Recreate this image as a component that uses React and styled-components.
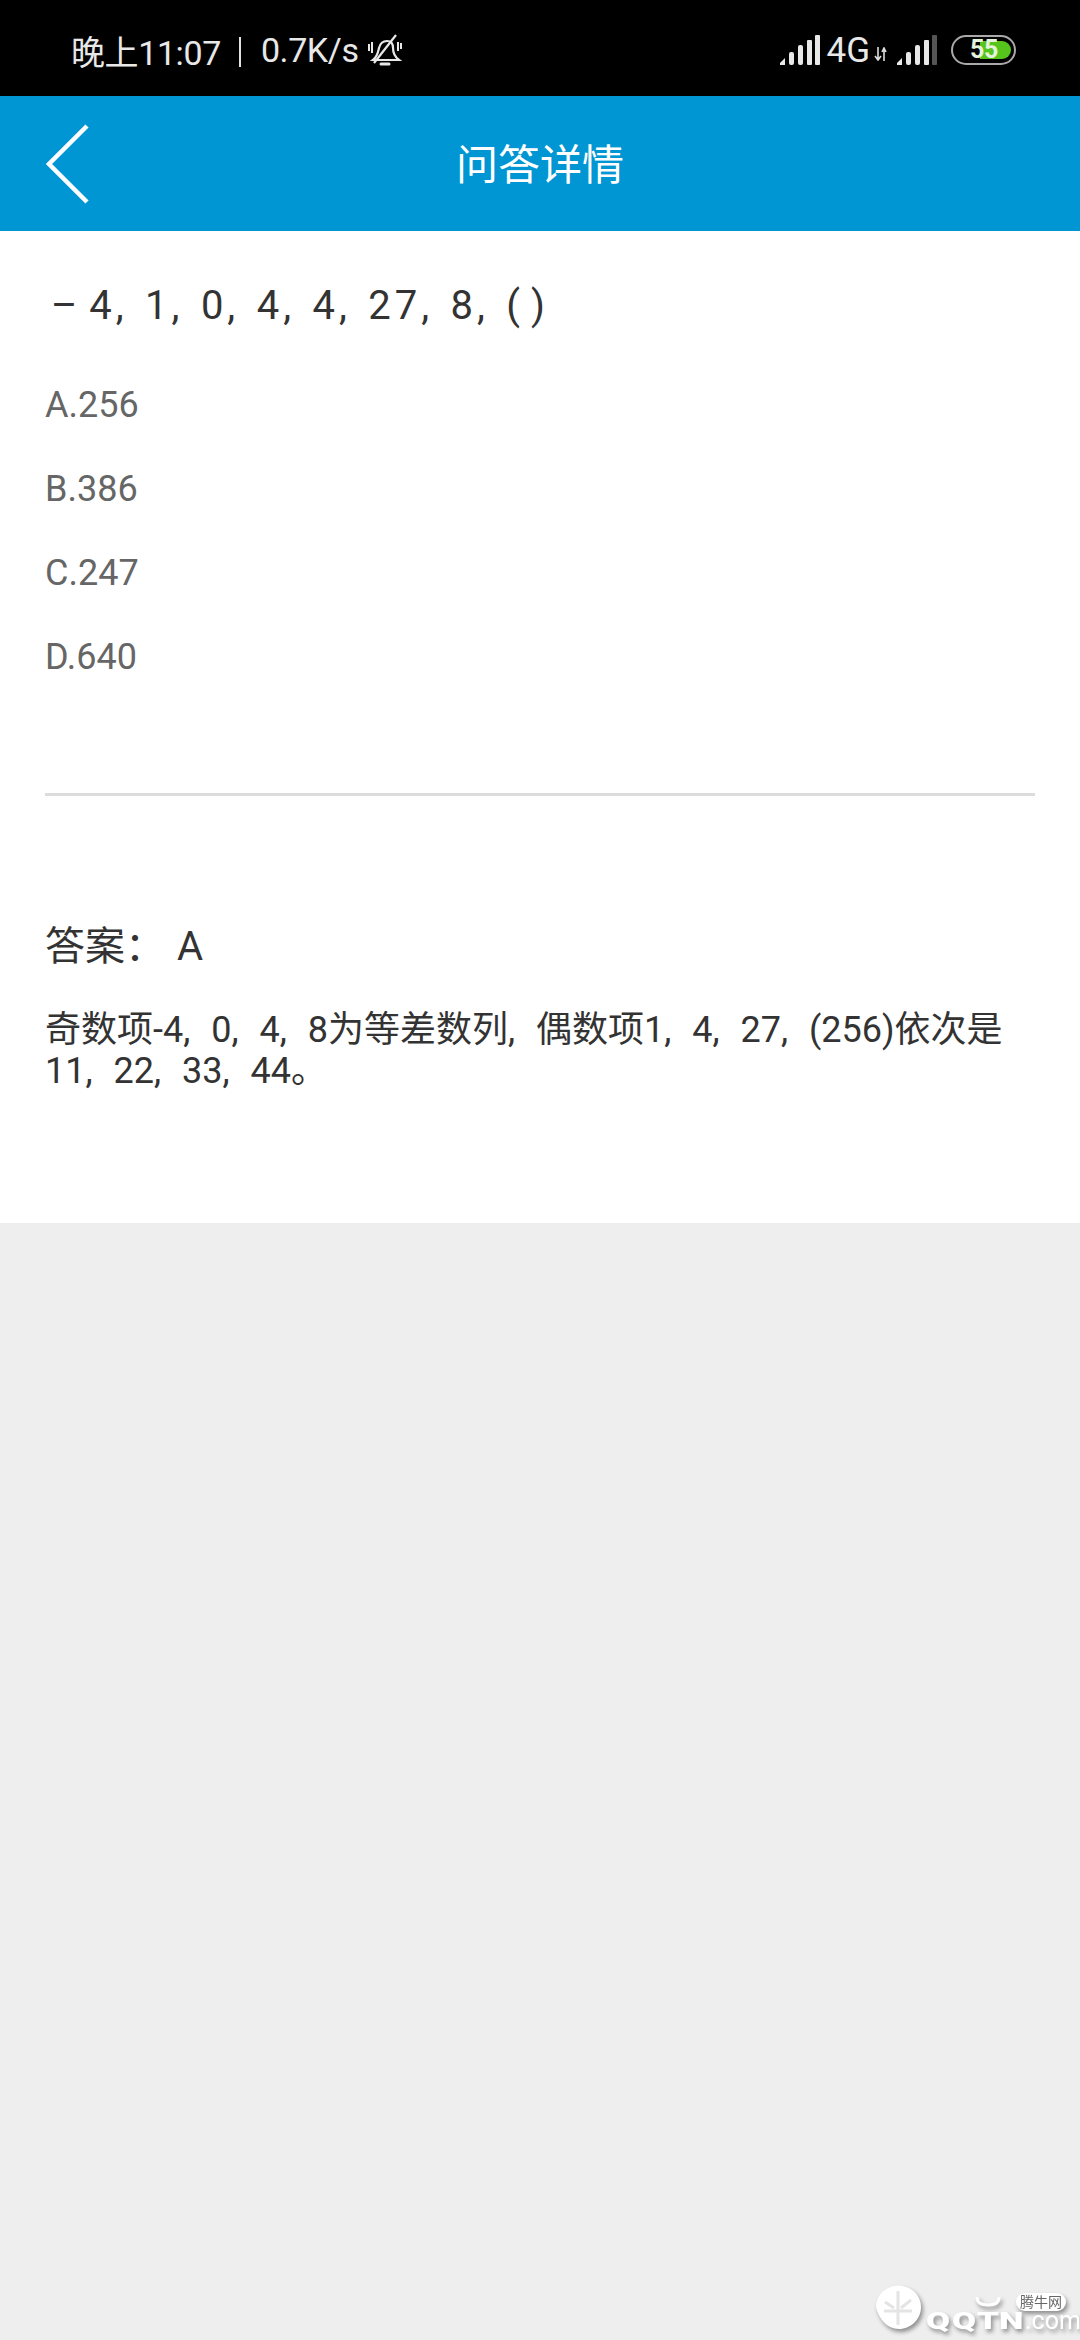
import React from "react";
import styled, { createGlobalStyle } from "styled-components";

const Global = createGlobalStyle`
  html, body { margin: 0; padding: 0; background: #eeeeee; }
  * { box-sizing: border-box; }
  body { font-family: Roboto, "Noto Sans CJK SC", sans-serif; }
`;
const Page = styled.div`
  position: relative; width: 1080px; height: 2340px; background: #eeeeee; overflow: hidden;
  display: flex; flex-direction: column;
`;
const StatusBar = styled.div`
  height: 96px; background: #000; color: #e8e8e8; display: flex; align-items: center;
  justify-content: space-between; padding: 4px 64px 0 71px; font-size: 34px;
`;
const StatusGroup = styled.div`display: flex; align-items: center; letter-spacing: -0.4px;`;
const Sep = styled.span`width: 2px; height: 30px; background: #e0e0e0; margin: 4px 20px 0 18px;`;
const Net = styled.span`font-size: 35px; margin: 0 4px 0 6px; letter-spacing: 0;`;
const Header = styled.header`
  height: 135px; background: #0095d3; display: grid; grid-template-columns: 1fr auto 1fr; align-items: center;
  padding-left: 45px;
`;
const Title = styled.h1`
  margin: 0 0 0 -45px; font-size: 42px; font-weight: 400; color: #fff; line-height: 1; padding-top: 4px;
`;
const Card = styled.main`
  background: #fff; height: 992px; padding: 0 45px; display: flex; flex-direction: column;
`;
const Question = styled.div`
  margin-top: 45px; height: 60px; line-height: 60px; font-size: 40px; color: #333;
  letter-spacing: 4px; word-spacing: 3.5px; padding-left: 6px; white-space: pre;
`;
const Blank = styled.span`word-spacing: 0; letter-spacing: 1.5px;`;
const Options = styled.ul`list-style: none; margin: 27px 0 0; padding: 0;`;
const Option = styled.li`height: 84px; line-height: 84px; font-size: 36px; color: #666;`;
const Divider = styled.hr`border: 0; height: 3px; background: #dcdcdc; margin: 94px 0 0;`;
const Answer = styled.div`margin-top: 121px; font-size: 40px; line-height: 60px; color: #333; word-spacing: 2px;`;
const Explain = styled.p`margin: 33px 0 0; font-size: 36px; line-height: 41px; color: #333; word-spacing: 12px;`;
const Watermark = styled.div`
  position: absolute; left: 875px; top: 2285px; width: 200px; height: 50px; color: #fff;
  filter: drop-shadow(2px 3px 2px rgba(0,0,0,.4));
`;
const Brand = styled.div`position: absolute; left: 51px; bottom: 4px; display: flex; align-items: baseline;`;
const BrandLetter = styled.span`
  display: inline-block; width: ${(p) => p.$w}px; font-size: 24px; font-weight: 900; line-height: 20px;
  transform: scaleX(1.45); transform-origin: left;
`;
const BrandSmall = styled.span`font-size: 25px; font-weight: 400; line-height: 20px; margin-left: -1px;`;
const Bubble = styled.span`
  position: absolute; left: 141px; top: 8px; background: #fff; color: #666; border-radius: 9px;
  font-size: 14px; line-height: 18px; padding: 0 4px;
`;
const Batt = styled.div`
  position: relative; width: 65px; height: 30px; margin-left: 14px; border: 2.5px solid #a9a9a9; border-radius: 15px;
  display: flex; justify-content: flex-end; align-items: center; padding: 3px;
`;
const BattFill = styled.div`width: 31px; height: 18px; background: #55c51d; border-radius: 0 10px 10px 0;`;
const BattText = styled.span`
  position: absolute; left: 17px; top: -3px; font-size: 25px; line-height: 32px; font-weight: 700; color: #e4f3dc;
`;

const MuteBell = () => (
  <svg width="34" height="34" viewBox="0 0 34 34" fill="none" stroke="#e8e8e8" strokeWidth="2.2" style={{ marginLeft: 9 }}>
    <path d="M5 27c4-3 5-7 6-12 1-4 4-7 8-7s6 3 6 7c0 5 2 9 6 12z" />
    <path d="M13 31h8" strokeWidth="3" strokeLinecap="round" />
    <path d="M6 30L28 2" />
    <path d="M1 11v7M4 9v11M30 9v9M33 10v6" strokeWidth="2" />
  </svg>
);
const Signal = ({ dim }) => (
  <svg width="40" height="30" viewBox="0 0 40 30" fill="#e8e8e8">
    <path d="M0 30v-2l5-5v7z" />
    <rect x="9" y="17" width="5" height="13" rx="2" />
    <rect x="18" y="10" width="5" height="20" rx="2" />
    <rect x="27" y="5" width="5" height="25" rx="1" />
    <rect x="35" y="0" width="5" height="30" rx="1" fill={dim ? "#555" : "#e8e8e8"} />
  </svg>
);
const Arrows = () => (
  <svg width="14" height="14" viewBox="0 0 14 14" fill="none" stroke="#ddd" strokeWidth="1.6" style={{ margin: "8px 9px 0 0" }}>
    <path d="M4 0v12M1 9l3 4 3-4" /><path d="M10 14V2M8 5l2-4 2 4" />
  </svg>
);
const Back = () => (
  <svg width="44" height="80" viewBox="0 0 44 80" fill="none" stroke="#fff" strokeWidth="4.5" style={{ filter: "blur(0.5px)" }}>
    <path d="M42 2L4 40l38 38" />
  </svg>
);
const Logo = () => (
  <svg width="47" height="46" viewBox="0 0 47 46" style={{ position: "absolute", left: 0, top: 0 }}>
    <path d="M1 22a22 21 0 0 1 45 0c0 12-10 22-22 22S4 34 1 22z" fill="#fff" />
    <path d="M23 6v34M10 17l9 6M36 15l-10 8M9 26h28" stroke="#e4e4e4" strokeWidth="3" fill="none" />
  </svg>
);
const Horns = () => (
  <svg width="26" height="10" viewBox="0 0 26 10" fill="none" stroke="#fff" strokeWidth="3" style={{ position: "absolute", left: 100, top: 12 }}>
    <path d="M2 0c0 6 5 8 11 8s11-2 11-8" />
  </svg>
);

export default function App() {
  return (
    <Page>
      <Global />
      <StatusBar>
        <StatusGroup>
          晚上11:07<Sep />0.7K/s<MuteBell />
        </StatusGroup>
        <StatusGroup>
          <Signal />
          <Net>4G</Net>
          <Arrows />
          <Signal dim />
          <Batt><BattFill /><BattText>55</BattText></Batt>
        </StatusGroup>
      </StatusBar>
      <Header>
        <Back />
        <Title>问答详情</Title>
        <span />
      </Header>
      <Card>
        <Question>{"–\u200A4, 1, 0, 4, 4, 27, 8, "}<Blank>{"(\u2009)"}</Blank></Question>
        <Options>
          <Option>A.256</Option>
          <Option>B.386</Option>
          <Option>C.247</Option>
          <Option>D.640</Option>
        </Options>
        <Divider />
        <Answer>答案： A</Answer>
        <Explain>奇数项-4, 0, 4, 8为等差数列, 偶数项1, 4, 27, (256)依次是<br />11, 22, 33, 44。</Explain>
      </Card>
      <Watermark>
        <Logo />
        <Horns />
        <Bubble>腾牛网</Bubble>
        <Brand>
          <BrandLetter $w={26}>Q</BrandLetter>
          <BrandLetter $w={25}>Q</BrandLetter>
          <BrandLetter $w={22}>T</BrandLetter>
          <BrandLetter $w={27}>N</BrandLetter>
          <BrandSmall>.com</BrandSmall>
        </Brand>
      </Watermark>
    </Page>
  );
}
